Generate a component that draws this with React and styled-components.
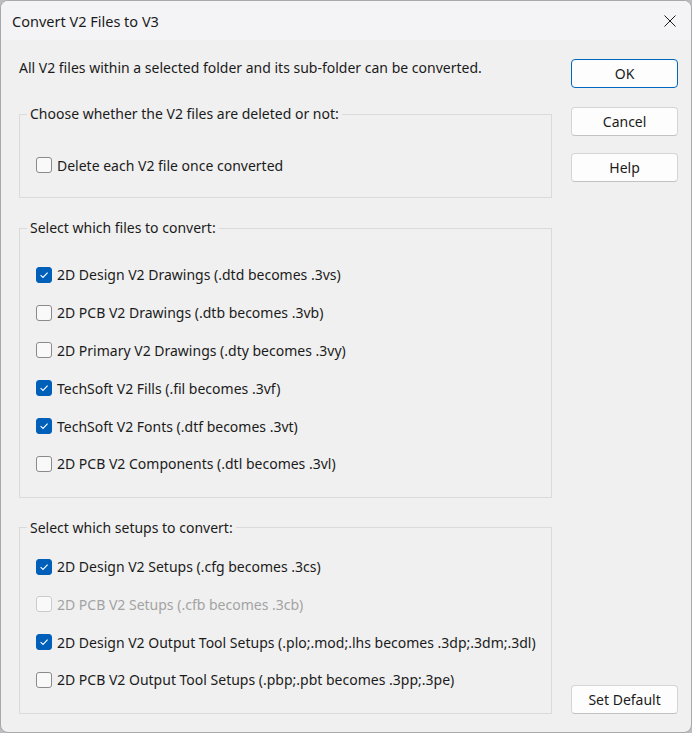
import React from "react";
import styled, { createGlobalStyle } from "styled-components";

const GlobalStyle = createGlobalStyle`
  html, body {
    margin: 0;
    padding: 0;
    background: #b9bcc0;
  }
  * {
    box-sizing: border-box;
  }
`;

const Window = styled.div`
  width: 692px;
  height: 733px;
  background: #f0f0f0;
  border: 1px solid #a8a8a8;
  border-radius: 8px;
  overflow: hidden;
  display: flex;
  flex-direction: column;
  font-family: "Noto Sans", "Open Sans", sans-serif;
  font-size: 14px;
  color: #1b1b1b;
`;

const TitleBar = styled.div`
  height: 39px;
  flex: none;
  background: #f4f4f7;
  display: flex;
  align-items: center;
  justify-content: space-between;
  padding: 0 14px 0 11px;
  font-size: 14.5px;
`;

const CloseIcon = styled.svg`
  width: 12px;
  height: 12px;
  margin-right: 1px;
`;

const Body = styled.div`
  flex: 1;
  display: flex;
  gap: 19px;
  padding: 19px 13px 19px 18px;
`;

const Main = styled.div`
  width: 534px;
  display: flex;
  flex-direction: column;
`;

const Intro = styled.div`
  line-height: 18px;
  height: 18px;
  margin-bottom: 28px;
  white-space: nowrap;
`;

const Group = styled.fieldset`
  margin: 0 0 ${(p) => p.$gap}px 0;
  border: 1px solid #dadada;
  border-radius: 0;
  padding: ${(p) => p.$top}px 0 ${(p) => p.$bottom}px 16px;
`;

const Legend = styled.legend`
  margin-left: -9px;
  padding: 0 3px;
  line-height: 18px;
`;

const Row = styled.label`
  height: ${(p) => p.$h}px;
  display: flex;
  align-items: center;
  gap: 5px;
  white-space: nowrap;
  color: ${(p) => (p.$disabled ? "#a3a3a3" : "#1b1b1b")};
`;

const Box = styled.span`
  width: 16px;
  height: 16px;
  flex: none;
  border-radius: 3px;
  display: flex;
  align-items: center;
  justify-content: center;
  background: ${(p) => (p.$checked ? "#005fb8" : "#f9f9f9")};
  border: 1px solid
    ${(p) => (p.$checked ? "#005fb8" : p.$disabled ? "#cbcbcb" : "#8a8a8a")};
`;

const Side = styled.div`
  width: 107px;
  display: flex;
  flex-direction: column;
`;

const Button = styled.button`
  height: 29px;
  width: 100%;
  margin-bottom: ${(p) => p.$mb || 0}px;
  margin-top: ${(p) => (p.$push ? "auto" : "0")};
  background: #fdfdfd;
  border: 1px solid ${(p) => (p.$primary ? "#0067c0" : "#d5d5d5")};
  border-bottom-color: ${(p) => (p.$primary ? "#0067c0" : "#c2c2c2")};
  border-radius: 4px;
  font-family: inherit;
  font-size: 14px;
  color: #1b1b1b;
  padding: 0;
`;

function Check({ checked, disabled, children, h = 38 }) {
  return (
    <Row $h={h} $disabled={disabled}>
      <Box $checked={checked} $disabled={disabled}>
        {checked && (
          <svg width="10" height="10" viewBox="0 0 10 10">
            <path
              d="M1.6 5.2 L4 7.5 L8.6 2.6"
              fill="none"
              stroke="#fff"
              strokeWidth="1.1"
            />
          </svg>
        )}
      </Box>
      {children}
    </Row>
  );
}

const files = [
  ["2D Design V2 Drawings (.dtd becomes .3vs)", true],
  ["2D PCB V2 Drawings (.dtb becomes .3vb)", false],
  ["2D Primary V2 Drawings (.dty becomes .3vy)", false],
  ["TechSoft V2 Fills (.fil becomes .3vf)", true],
  ["TechSoft V2 Fonts (.dtf becomes .3vt)", true],
  ["2D PCB V2 Components (.dtl becomes .3vl)", false],
];

const setups = [
  ["2D Design V2 Setups (.cfg becomes .3cs)", true, false],
  ["2D PCB V2 Setups (.cfb becomes .3cb)", false, true],
  ["2D Design V2 Output Tool Setups (.plo;.mod;.lhs becomes .3dp;.3dm;.3dl)", true, false],
  ["2D PCB V2 Output Tool Setups (.pbp;.pbt becomes .3pp;.3pe)", false, false],
];

export default function App() {
  return (
    <>
      <GlobalStyle />
      <Window>
        <TitleBar>
          <span>Convert V2 Files to V3</span>
          <CloseIcon viewBox="0 0 12 12">
            <path d="M0.5 0.5 L11.5 11.5 M11.5 0.5 L0.5 11.5" stroke="#1b1b1b" strokeWidth="1" />
          </CloseIcon>
        </TitleBar>
        <Body>
          <Main>
            <Intro>All V2 files within a selected folder and its sub-folder can be converted.</Intro>
            <Group $top={23} $bottom={13} $gap={21}>
              <Legend>Choose whether the V2 files are deleted or not:</Legend>
              <Check>Delete each V2 file once converted</Check>
            </Group>
            <Group $top={19} $bottom={14} $gap={21}>
              <Legend>Select which files to convert:</Legend>
              {files.map(([t, c]) => (
                <Check key={t} checked={c} h={37.8}>
                  {t}
                </Check>
              ))}
            </Group>
            <Group $top={11} $bottom={14} $gap={0}>
              <Legend>Select which setups to convert:</Legend>
              {setups.map(([t, c, d]) => (
                <Check key={t} checked={c} disabled={d} h={37.7}>
                  {t}
                </Check>
              ))}
            </Group>
          </Main>
          <Side>
            <Button $primary $mb={19}>OK</Button>
            <Button $mb={17}>Cancel</Button>
            <Button>Help</Button>
            <Button $push>Set Default</Button>
          </Side>
        </Body>
      </Window>
    </>
  );
}
